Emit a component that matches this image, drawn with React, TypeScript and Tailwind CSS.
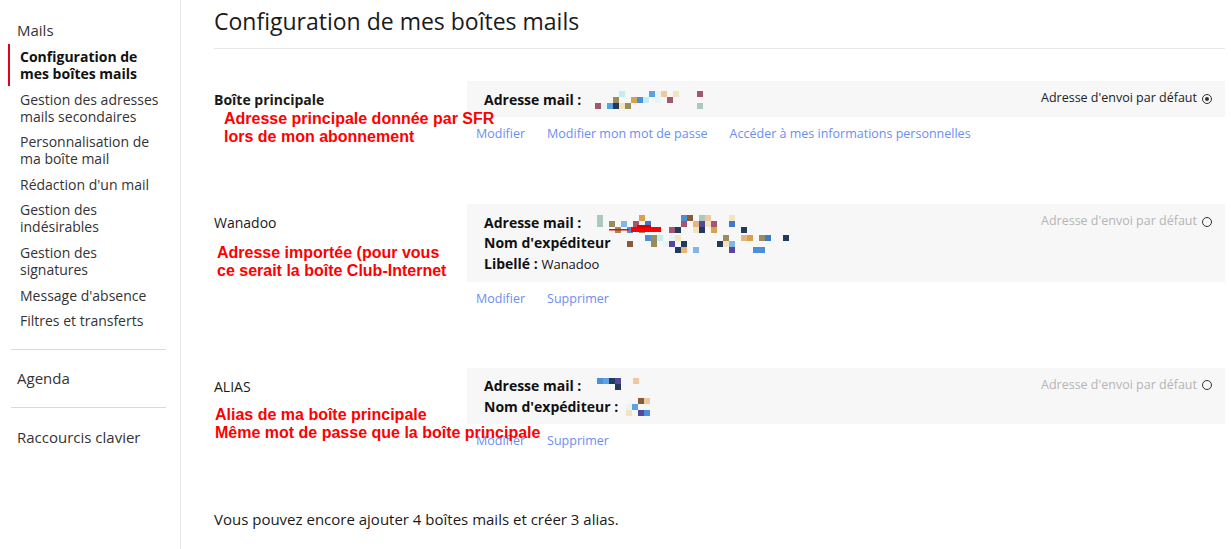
import React from 'react';

const PALETTE = [
  '#f3e3bf', '#e6b57c', '#4a8fd8', '#a5566f', '#a9c9c2', '#54489a', '#d8a14d', '#9b8c5c',
  '#c4ecf3', '#f1c7a0', '#23395e', '#8b5a36', '#5aa2e2', '#3a7bcb', '#e9f4f7', '#7fb6ea',
];

// pixellated (censored) address, drawn as little squares
function Pixels({ width, seed, red = false }: { width: number; seed: number; red?: boolean }) {
  let s = seed;
  const rnd = () => {
    s = (s * 9301 + 49297) % 233280;
    return s / 233280;
  };
  const cells: { x: number; y: number; c: string }[] = [];
  const cols = Math.floor(width / 6);
  for (let i = 0; i < cols; i++) {
    for (let j = 0; j < 3; j++) {
      if (rnd() < 0.32) {
        cells.push({ x: i * 6, y: j * 6, c: PALETTE[Math.floor(rnd() * PALETTE.length)] });
      }
    }
  }
  return (
    <svg width={width} height={18} className="inline-block align-middle">
      {cells.map((c, i) => (
        <rect key={i} x={c.x} y={c.y} width={6} height={6} fill={c.c} />
      ))}
      {red && (
        <g>
          <rect x={12} y={14} width={20} height={1.5} fill="#ff0000" />
          <rect x={34} y={12} width={30} height={5} fill="#ff0000" />
          <rect x={40} y={10} width={14} height={3} fill="#e00000" />
        </g>
      )}
    </svg>
  );
}

function Radio({ checked }: { checked?: boolean }) {
  return (
    <span className="inline-flex w-[10px] h-[10px] rounded-full border border-[#333] items-center justify-center ml-[5px]">
      {checked && <span className="w-[4px] h-[4px] rounded-full bg-[#333]" />}
    </span>
  );
}

const sideItems: { label: string[]; active?: boolean }[] = [
  { label: ['Configuration de', 'mes boîtes mails'], active: true },
  { label: ['Gestion des adresses', 'mails secondaires'] },
  { label: ['Personnalisation de', 'ma boîte mail'] },
  { label: ["Rédaction d'un mail"] },
  { label: ['Gestion des', 'indésirables'] },
  { label: ['Gestion des', 'signatures'] },
  { label: ["Message d'absence"] },
  { label: ['Filtres et transferts'] },
];

function Section({
  title,
  bold,
  note,
  noteClass,
  children,
  checked,
  links,
}: {
  title: string;
  bold?: boolean;
  note: string[];
  noteClass: string;
  children: React.ReactNode;
  checked?: boolean;
  links: string[];
}) {
  return (
    <div className="relative flex">
      <div className={`w-[253px] shrink-0 pt-[9px] text-[14px] leading-[19px] ${bold ? 'font-bold' : ''} text-[#1a1a1a]`}>
        {title}
      </div>
      <div className="flex-1">
        <div className="bg-[#f7f7f7] flex justify-between pl-[17px] pr-[13px] py-[8px]">
          <div className="text-[14px] leading-[19px] text-[#111]">{children}</div>
          <div className={`flex items-center h-[19px] text-[12.5px] ${checked ? 'text-[#222]' : 'text-[#b5b5b5]'}`}>
            Adresse d'envoi par défaut
            <Radio checked={checked} />
          </div>
        </div>
        <div className="flex gap-[22px] pl-[9px] mt-[8px] text-[12.5px] leading-[18px] text-[#6b8ef2]">
          {links.map((l) => (
            <span key={l}>{l}</span>
          ))}
        </div>
      </div>
      <div
        className={`absolute ${noteClass} text-[16px] leading-[18px] font-bold text-[#ff0000]`}
        style={{ fontFamily: '"Liberation Sans", Arial, sans-serif' }}
      >
        {note.map((n) => (
          <div key={n}>{n}</div>
        ))}
      </div>
    </div>
  );
}

export default function App() {
  return (
    <div
      className="w-[1231px] h-[549px] bg-white flex overflow-hidden text-[#1a1a1a]"
      style={{ fontFamily: '"Open Sans", "Noto Sans", sans-serif' }}
    >
      <aside className="w-[181px] shrink-0 border-r border-[#e6e6e6] pt-[20px] pl-[8px]">
        <div className="pl-[9px] text-[15px] leading-[20px] text-[#333]">Mails</div>
        <ul className="mt-[8px] flex flex-col gap-[8.6px]">
          {sideItems.map((it) => (
            <li
              key={it.label[0] + it.label.length}
              className={`pl-[9px] border-l-[2px] text-[14px] leading-[17px] ${
                it.active ? 'border-[#e2001a] font-bold text-[#111] py-[4px] -my-[4px]' : 'border-transparent text-[#333]'
              }`}
            >
              {it.label.map((l) => (
                <div key={l} className="pl-[1px]">{l}</div>
              ))}
            </li>
          ))}
        </ul>
        <div className="ml-[3px] w-[155px] border-t border-[#d6dbe3] mt-[20px]" />
        <div className="pl-[9px] pt-[18px] pb-[19px] text-[15px] leading-[20px] text-[#333]">Agenda</div>
        <div className="ml-[3px] w-[155px] border-t border-[#d6dbe3]" />
        <div className="pl-[9px] pt-[19px] text-[15px] leading-[20px] text-[#333]">Raccourcis clavier</div>
      </aside>

      <main className="flex-1 pl-[33px] pr-[6px]">
        <h1 className="pt-[6px] pb-[11px] text-[23px] leading-[31px] text-[#1a1a1a] border-b border-[#e8e8e8]">
          Configuration de mes boîtes mails
        </h1>

        <div className="mt-[32px]">
          <Section
            title="Boîte principale"
            bold
            checked
            note={['Adresse principale donnée par SFR', 'lors de mon abonnement']}
            noteClass="left-[10px] top-[29px]"
            links={['Modifier', 'Modifier mon mot de passe', 'Accéder à mes informations personnelles']}
          >
            <div className="flex items-center">
              <span className="font-bold">Adresse mail :</span>
              <span className="ml-[14px]"><Pixels width={114} seed={7} /></span>
            </div>
          </Section>
        </div>

        <div className="mt-[61px]">
          <Section
            title="Wanadoo"
            note={['Adresse importée (pour vous', 'ce serait la boîte Club-Internet']}
            noteClass="left-[3px] top-[40px]"
            links={['Modifier', 'Supprimer']}
          >
            <div className="flex items-center">
              <span className="font-bold">Adresse mail :</span>
              <span className="ml-[16px]"><Pixels width={156} seed={21} red /></span>
            </div>
            <div className="flex items-center">
              <span className="font-bold">Nom d'expéditeur</span>
              <span className="ml-[4px]"><Pixels width={176} seed={42} /></span>
            </div>
            <div className="mt-[1px]">
              <span className="font-bold">Libellé :</span> <span className="text-[13px]">Wanadoo</span>
            </div>
          </Section>
        </div>

        <div className="mt-[60px]">
          <Section
            title="ALIAS"
            note={['Alias de ma boîte principale', 'Même mot de passe que la boîte principale']}
            noteClass="left-[1px] top-[38px]"
            links={['Modifier', 'Supprimer']}
          >
            <div className="flex items-center">
              <span className="font-bold">Adresse mail :</span>
              <span className="ml-[4px]"><Pixels width={58} seed={5} /></span>
            </div>
            <div className="flex items-center">
              <span className="font-bold">Nom d'expéditeur :</span>
              <span className="ml-[2px]"><Pixels width={30} seed={13} /></span>
            </div>
          </Section>
        </div>

        <p className="mt-[59px] text-[15px] leading-[20px] text-[#1a1a1a]">
          Vous pouvez encore ajouter 4 boîtes mails et créer 3 alias.
        </p>
      </main>
    </div>
  );
}
